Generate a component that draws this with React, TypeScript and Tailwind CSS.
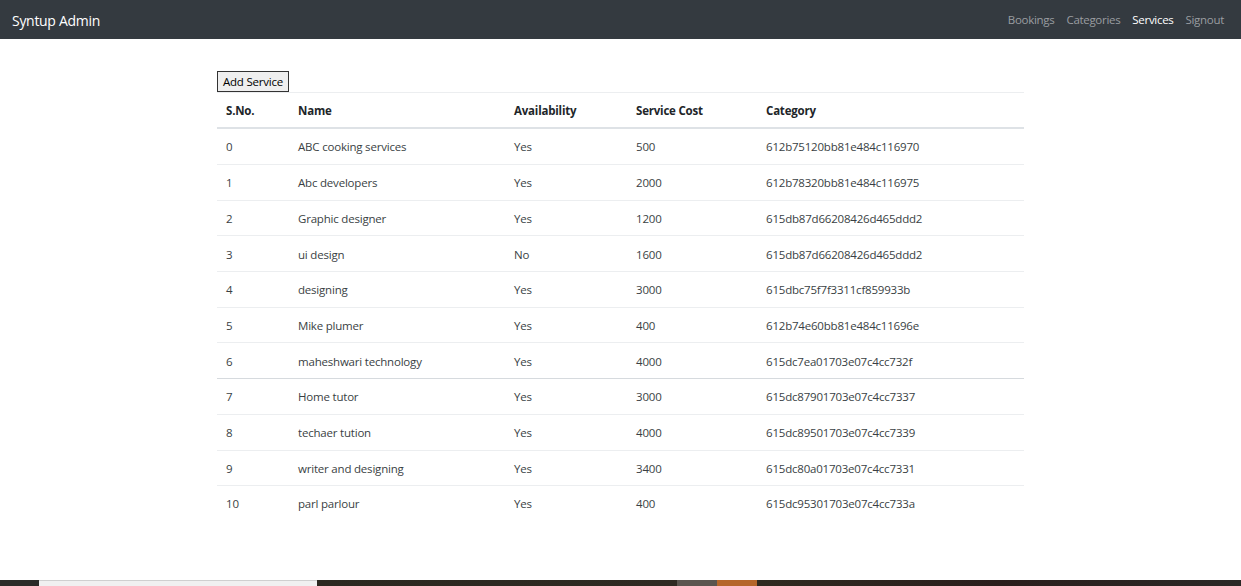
import React from "react";

const rows = [
  ["0", "ABC cooking services", "Yes", "500", "612b75120bb81e484c116970"],
  ["1", "Abc developers", "Yes", "2000", "612b78320bb81e484c116975"],
  ["2", "Graphic designer", "Yes", "1200", "615db87d66208426d465ddd2"],
  ["3", "ui design", "No", "1600", "615db87d66208426d465ddd2"],
  ["4", "designing", "Yes", "3000", "615dbc75f7f3311cf859933b"],
  ["5", "Mike plumer", "Yes", "400", "612b74e60bb81e484c11696e"],
  ["6", "maheshwari technology", "Yes", "4000", "615dc7ea01703e07c4cc732f"],
  ["7", "Home tutor", "Yes", "3000", "615dc87901703e07c4cc7337"],
  ["8", "techaer tution", "Yes", "4000", "615dc89501703e07c4cc7339"],
  ["9", "writer and designing", "Yes", "3400", "615dc80a01703e07c4cc7331"],
  ["10", "parl parlour", "Yes", "400", "615dc95301703e07c4cc733a"],
];

const cols = "grid grid-cols-[72px_216px_122px_130px_267px]";

export default function App() {
  return (
    <div
      className="h-[586px] w-[1241px] flex flex-col bg-white overflow-hidden"
      style={{ fontFamily: '"Open Sans", "Noto Sans", sans-serif' }}
    >
      <nav className="h-[39px] shrink-0 bg-[#343a40] flex items-center justify-between pl-[12px] pr-[17px]">
        <span className="text-white text-[14px] tracking-[-0.3px] pt-[1px]">Syntup Admin</span>
        <div className="flex gap-[12px] text-[11.5px] tracking-[-0.3px] pt-[1px]">
          <span className="text-[#9a9da0]">Bookings</span>
          <span className="text-[#9a9da0]">Categories</span>
          <span className="text-white">Services</span>
          <span className="text-[#9a9da0]">Signout</span>
        </div>
      </nav>
      <main className="flex-1 pt-[32px] pl-[217px]">
        <button className="h-[21px] w-[72px] border border-[#333] bg-[#efefef] text-[11.5px] text-black leading-none tracking-[-0.2px] flex items-center justify-center pt-[1px]">
          Add Service
        </button>
        <div className="w-[807px] text-[11.5px] tracking-[-0.2px] text-[#212529]">
          <div className={`${cols} h-[37px] border-t border-[#eceef0] border-b-2 border-b-[#dee2e6] items-center font-bold pt-[2px]`}>
            <div className="pl-[9px]">S.No.</div>
            <div className="pl-[9px]">Name</div>
            <div className="pl-[9px]">Availability</div>
            <div className="pl-[9px]">Service Cost</div>
            <div className="pl-[9px]">Category</div>
          </div>
          {rows.map((r, i) => (
            <div
              key={i}
              className={`${cols} items-center text-[#3a3f44] pt-[1px] ${
                i === 0 ? "h-[35px]" : "h-[35.7px] border-t"
              } ${i === 7 ? "border-[#d6dade]" : "border-[#eceef0]"}`}
            >
              {r.map((c, j) => (
                <div key={j} className="pl-[9px]">
                  {c}
                </div>
              ))}
            </div>
          ))}
        </div>
      </main>
      <div className="h-[6px] shrink-0 flex">
        <div className="w-[39px] bg-[#2b2b28]" />
        <div className="w-[278px] bg-[#f0f0f0] border-t border-[#cfcfcf]" />
        <div className="w-[360px] bg-gradient-to-r from-[#2b2820] to-[#2e2a22]" />
        <div className="w-[40px] bg-[#5a554f]" />
        <div className="w-[40px] bg-[#b5662a]" />
        <div className="flex-1 bg-gradient-to-r from-[#2f2a20] via-[#2a1e1c] to-[#2a2826]" />
      </div>
    </div>
  );
}
